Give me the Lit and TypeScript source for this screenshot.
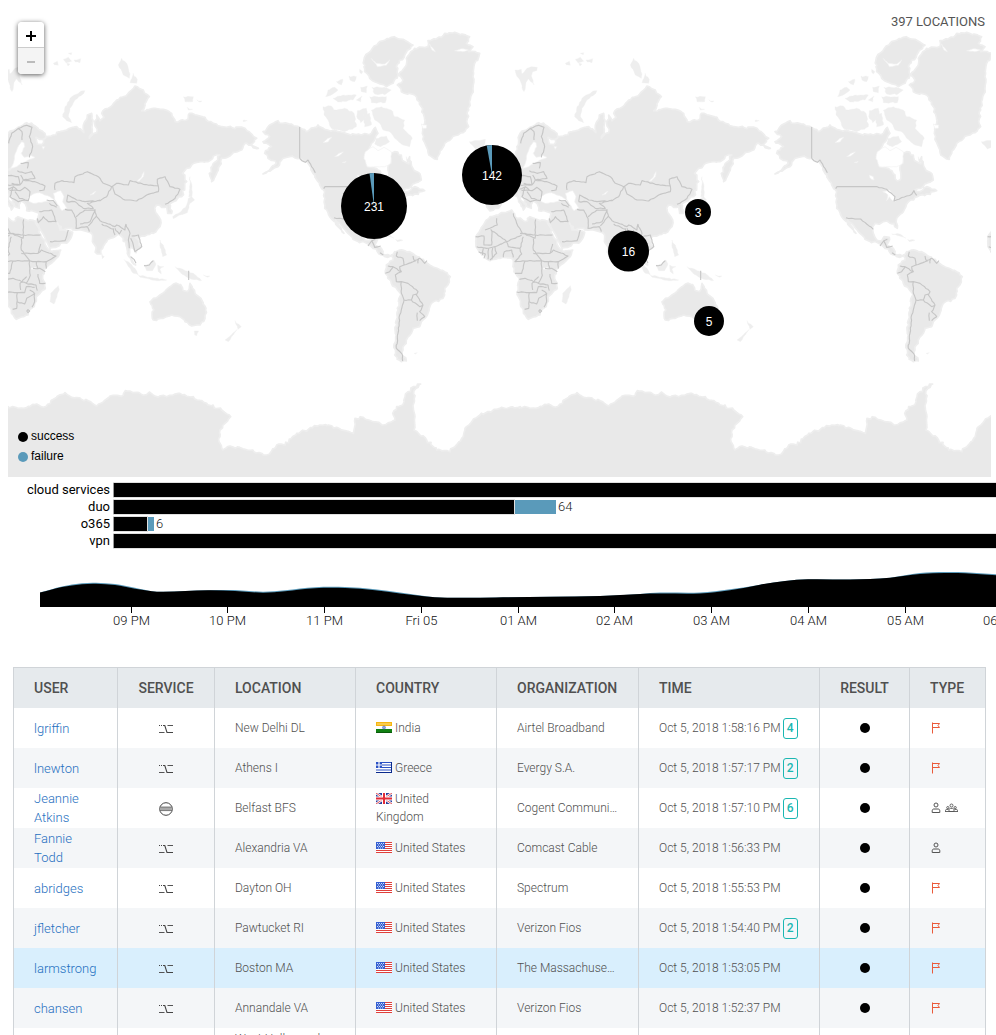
import { LitElement, html, svg, css, nothing } from "lit";
import { customElement } from "lit/decorators.js";
import { classMap } from "lit/directives/class-map.js";

/* ---------- world map geometry (three units per map pixel) ---------- */

type Pt = [number, number];

const parse = (s: string): Pt[] =>
  s.trim().split(/\s+/).map((p) => p.split(",").map(Number) as Pt);

/* Breaks long edges into small irregular steps, so coasts do not look ruled. */
const rough = (pts: Pt[], amp: number, closed: boolean): Pt[] => {
  const out: Pt[] = [];
  let seed = 7;
  const rnd = () => {
    seed = (seed * 16807) % 2147483647;
    return seed / 2147483647 - 0.5;
  };
  pts.forEach((a, i) => {
    out.push(a);
    if (!closed && i === pts.length - 1) return;
    const b = pts[(i + 1) % pts.length];
    const steps = Math.floor(Math.hypot(b[0] - a[0], b[1] - a[1]) / 7);
    for (let k = 1; k < steps; k++) {
      const t = k / steps;
      out.push([
        a[0] + (b[0] - a[0]) * t + rnd() * amp,
        a[1] + (b[1] - a[1]) * t + rnd() * amp,
      ]);
    }
  });
  return out;
};

const toPath = (pts: Pt[], closed: boolean) =>
  "M" + pts.map(([x, y]) => `${x.toFixed(1)} ${y.toFixed(1)}`).join("L") + (closed ? "Z" : "");
const shapes = (list: string[], amp = 7) =>
  list.map((s) => toPath(rough(parse(s), amp, true), true)).join("");
const lines = (list: string[]) =>
  list.map((s) => toPath(rough(parse(s), 3, false), false)).join("");
const straight = (list: string[]) => list.map((s) => toPath(parse(s), false)).join("");

const EURASIA = shapes([
  "20,420 24,400 54,382 80,368 100,375 135,400 138,412 118,418 108,412 112,432 125,434 140,410 160,405 180,395 200,390 230,380 252,398 250,375 262,345 275,340 277,390 268,415 290,398 284,370 290,345 300,362 312,352 305,340 330,322 350,300 385,280 405,258 430,270 448,290 425,332 460,325 490,328 515,340 525,365 560,360 568,340 600,348 640,370 680,382 735,385 755,402 770,415 750,435 775,445 735,430 725,450 690,468 664,475 655,510 635,545 628,520 640,490 660,465 640,468 625,485 590,487 560,505 548,520 560,545 545,590 520,605 508,612 515,640 503,640 500,620 485,622 470,615 465,630 482,660 480,680 460,700 425,708 405,712 425,740 408,758 392,742 388,765 407,795 395,785 382,760 378,735 370,715 355,702 345,710 320,725 308,745 302,762 292,762 280,730 272,698 262,695 235,690 205,685 190,690 172,668 180,690 200,692 218,697 205,725 150,745 145,735 128,700 108,668 118,640 105,635 80,632 76,612 64,602 58,625 45,620 38,600 20,575 26,600 42,615 34,630 20,605 4,580 -16,590 -31,605 -41,625 -66,633 -76,620 -76,590 -40,585 -45,560 -10,540 20,510 40,500 20,510 10,480",
]);
const AFRICA = shapes([
  "-46,645 -1,630 9,650 39,665 54,650 74,658 106,664 124,710 139,740 154,755 182,750 169,775 136,805 128,825 136,850 136,865 109,890 104,910 84,945 49,958 34,930 16,875 22,840 6,815 4,790 -1,775 -26,772 -66,782 -91,765 -108,740 -109,710 -86,675 -66,650",
]);
const AUSTRALIA = shapes([
  "450,905 480,885 500,868 520,852 542,854 548,870 562,875 570,850 585,880 605,900 618,925 615,955 600,975 575,978 555,965 540,950 515,945 490,955 460,960 458,925",
]);
const EAST_ISLANDS = shapes(
  [
    "575,590 584,600 570,610 562,638 540,645 520,656 518,650 545,632 560,615 565,595",
    "570,530 576,560 576,590 566,590 569,560",
    "255,272 250,282 225,300 210,325 205,350 215,368 200,362 188,350 195,320 215,290 240,275",
    "365,175 380,190 385,205 390,222 388,235 370,225 355,195",
    "400,220 412,238 410,250 390,248",
    "550,290 580,290 578,305 555,305",
    "590,300 606,303 600,307",
    "562,322 578,328 565,330",
    "730,360 742,362 730,365",
    "480,720 490,735 500,765 488,770 480,742",
    "432,795 448,792 462,780 468,792 458,812 440,812",
    "372,778 385,785 405,805 415,825 400,820 385,800",
    "415,825 450,832 500,840 470,842 420,832",
    "473,795 492,800 480,808 484,822 475,815",
    "525,800 540,805 556,812 580,820 605,842 575,838 545,822",
    "583,993 596,993 590,1007 584,1005",
    "705,962 724,980 714,988",
    "712,988 700,1005 685,1025 675,1020 698,1000",
    "175,857 178,870 162,912 150,905 152,880",
    "305,758 313,770 307,776",
    "9,210 28,208 30,222 45,205 58,200 76,202 74,212 62,215 58,228 66,255 56,245 49,236 42,248 36,275 30,262 24,240 14,228",
    "-128,425 -80,418 -84,440 -110,447",
    "160,190 172,184 175,196 163,194",
    "190,178 205,172 215,184 198,188",
    "205,160 215,158 214,164",
    "222,180 242,176 240,188 226,186",
    "200,190 210,192 204,198",
    "610,825 630,828 622,832",
  ],
  4
);
const SEAS = shapes(
  [
    "65,425 52,445 45,462 40,490 32,505 50,500 68,488 90,478 105,472 92,466 72,472 64,460 74,440 72,428",
    "84,592 100,582 118,578 150,590 166,604 140,604 100,610 86,604",
    "160,580 182,572 192,590 188,606 200,624 186,632 172,612 164,598",
    "92,804 108,802 106,808 94,808",
    "412,543 424,532 432,515 430,530 418,543",
    "126,440 134,440 130,448",
    "270,585 288,574 280,583",
  ],
  3
);
const EAST_BORDERS = lines([
  "71,658 69,705 24,700",
  "71,705 122,705",
  "4,640 14,670 31,700 69,715 71,705",
  "-46,655 -44,675 -81,690",
  "-64,688 -16,725 29,705",
  "-109,710 -84,708 -84,735 -61,735 -61,690",
  "-106,740 -76,745 -51,740 -16,725 -11,740 24,745 34,710",
  "-51,740 -46,760 -66,780",
  "-86,745 -88,765",
  "-70,746 -72,778",
  "-58,744 -60,778",
  "-26,772 -23,755 -1,750 4,772",
  "-100,755 -80,762 -84,775",
  "24,745 29,762 9,785 39,783 89,782 64,750 64,715",
  "64,760 114,760 122,732",
  "89,782 109,785 139,785 168,768 124,750 114,760",
  "89,782 89,812 91,826 79,850 39,835 22,838",
  "39,783 29,820 9,820",
  "14,876 74,878 79,860 104,862",
  "52,878 50,925 38,928",
  "52,905 74,912 80,895 104,880 89,870",
  "99,805 119,805 136,815",
  "114,822 119,850 136,850",
  "109,785 114,808",
  "80,830 60,850 62,870",
  "79,850 108,855 112,872",
  "104,880 104,905 96,922",
  "139,785 139,806",
  "165,570 165,550 185,542 222,548 225,530 262,515 295,530 310,550 335,560 320,590 300,602 255,605 230,600 203,585 200,605",
  "335,560 350,550 385,555 390,542 430,553 475,558 475,575 440,585 410,603 375,600 345,582 338,560",
  "475,558 472,538 495,530 510,560 540,568 525,595 495,613",
  "200,605 225,605 250,625 280,625 262,610 300,600",
  "195,628 215,630 228,655 228,685 262,680 268,695",
  "228,650 255,630 285,630 270,665 240,672",
  "285,628 290,650 300,662 345,680 350,675 375,690 378,672",
  "290,648 265,678",
  "305,672 340,688",
  "378,672 390,700 385,720 388,745",
  "340,685 345,705",
  "345,685 358,702 365,690",
  "395,708 415,705 425,740 405,755 400,735 392,715",
  "118,635 155,630 168,665 145,665 130,650 115,668 112,655",
  "150,725 195,722 205,690",
  "140,600 160,602 172,618",
  "148,610 170,622",
  "432,797 448,795 460,782",
  "26,430 35,400 55,385 66,395 66,420",
  "55,385 80,376 96,382 88,410 98,440 88,472",
  "62,490 85,488 82,505",
  "52,512 75,520 95,515 105,535 70,540 62,525",
  "70,540 105,545 135,558 132,570 118,572",
  "24,555 60,555 70,540",
  "28,570 60,572 75,562 90,575 85,602 58,595 45,575",
  "20,525 55,530 60,555 35,550",
  "40,560 30,590 55,605 75,600",
  "22,568 40,560 52,570",
  "80,933 84,929 89,933 84,938 80,933",
  "392,770 402,778 408,790",
]);

const AMERICAS = shapes([
  "150,362 165,370 190,372 215,382 235,395 270,375 290,388 330,395 360,402 400,405 430,400 442,382 450,400 430,430 410,470 420,500 450,510 465,525 472,543 480,540 480,510 490,488 484,465 500,455 520,465 530,485 542,492 545,470 555,505 575,520 580,540 560,550 525,570 540,575 560,560 590,572 560,582 525,592 500,612 490,635 470,655 472,685 462,670 430,665 402,675 400,700 410,720 425,722 432,710 448,712 440,735 460,745 470,765 488,768 480,772 460,765 435,745 420,732 380,720 360,700 335,670 322,660 348,700 330,680 305,650 290,625 287,570 270,545 255,520 240,490 215,475 185,470 165,475 150,500 105,522 145,490 120,475 110,460 130,440 105,425 125,410 105,395 125,375",
  "500,755 515,750 545,755 560,765 590,785 605,795 650,815 667,830 655,860 645,895 610,910 600,940 580,965 575,980 555,985 550,1000 535,1020 525,1050 520,1062 535,1083 520,1085 500,1065 502,1000 510,930 517,880 490,850 472,820 475,795 495,780 490,765",
  "560,145 600,140 600,122 640,112 650,100 680,97 725,110 715,130 735,140 722,155 755,160 752,172 740,190 735,230 735,270 728,290 722,330 716,365 722,380 690,405 650,430 635,460 628,478 610,470 595,440 583,400 590,370 580,320 560,285 520,275 508,255 525,240 512,225 535,195 535,175",
  "430,150 455,125 490,112 525,118 555,135 530,165 505,200 510,225 495,250 475,260 440,245 425,235 410,215 408,180 420,160",
]);
const WEST_ISLANDS = shapes([
  "430,330 460,320 490,330 500,350 530,360 525,385 553,415 545,440 525,435 500,415 490,400 465,390 455,370 440,360",
  "285,320 310,318 318,330 350,325 378,340 385,380 350,395 310,385 300,360 288,345",
  "388,332 415,325 418,345 398,368 386,350",
  "405,345 425,340 430,375 410,380",
  "425,290 475,290 472,308 430,308",
  "300,270 320,262 330,270 310,285 293,290",
  "315,295 345,285 385,285 375,300 330,306",
  "325,245 345,238 340,255",
  "363,228 385,230 380,245 366,240",
  "395,208 405,215 400,222",
  "398,262 418,258 415,278 400,275",
  "385,300 402,288 398,305",
  "432,262 470,262 490,270 470,284 440,282",
  "445,415 475,408 485,425 458,440 440,432",
  "535,470 545,480 538,490",
  "455,702 480,702 498,714 478,708",
  "503,718 525,721 508,725",
  "558,1060 568,1058 562,1062",
], 5);
const LAKES = shapes(
  [
    "428,575 448,570 462,585 466,604 458,602 448,590 440,602 444,585",
    "285,428 300,415 312,412 300,426",
    "320,470 338,458 346,456 332,468",
    "343,488 355,484 350,488",
    "388,525 400,530 402,540 394,538",
    "412,455 435,440 450,452 468,442 490,455 488,490 470,500 445,500 418,500 408,475",
    "430,175 445,190 470,192 485,180 475,196 448,200",
    "605,132 622,155 612,150",
    "680,152 700,146 722,150 705,155",
    "580,372 596,375 595,385 584,385",
  ],
  3
);
const WEST_BORDERS = lines([
  "215,475 232,487 240,480 262,518",
  "412,560 440,568 465,590 462,603 500,588 515,583 522,572 530,586",
  "318,653 345,657 362,657 380,672 400,688",
  "420,738 432,722 440,742 458,738",
  "432,722 442,718",
  "456,758 466,765",
  "508,755 505,768 525,775 528,795 555,785 575,775 590,790 597,782",
  "555,768 562,785",
  "572,776 570,790",
  "528,795 515,800 520,815 502,825 505,845 520,845 540,850 570,875 565,885 585,915 575,935 590,950 575,962",
  "520,815 495,800 480,798",
  "495,802 485,815 472,820",
  "528,900 550,900 555,885 566,882",
  "550,900 575,920 585,916",
  "568,938 568,962",
  "520,845 520,880 528,900 515,945 510,1000 505,1045 522,1062 524,1083",
]);
const RULED_BORDERS = straight(["215,381 215,475", "287,566 291,560 412,560"]);
const PAPUA_BORDER = straight(["566,812 566,840"]);

const ANTARCTICA = shapes([
  "24,110 70,115 110,102 130,112 160,88 195,68 215,82 265,92 290,108 330,78 370,76 376,62 400,68 440,74 448,66 465,78 500,80 540,70 580,80 620,100 665,120 692,140 675,160 660,180 657,215 668,240 690,228 735,238 800,255 830,225 855,225 890,190 960,165 1010,172 1060,190 1065,145 1090,142 1120,155 1150,165 1185,150 1178,130 1190,110 1208,105 1215,80 1240,50 1262,42 1242,62 1242,180 1280,210 1310,240 1350,245 1385,205 1395,175 1440,135 1500,115 1560,110 1560,330 24,330",
]);

interface Pin { x: number; y: number; r: number; count: number; failed: number; }
const PINS: Pin[] = [
  { x: 374, y: 206, r: 33, count: 231, failed: 5 },
  { x: 492, y: 175, r: 30, count: 142, failed: 4 },
  { x: 628.5, y: 251, r: 20.5, count: 16, failed: 0 },
  { x: 698, y: 212, r: 13, count: 3, failed: 0 },
  { x: 709, y: 321, r: 15, count: 5, failed: 0 },
];

const slice = (p: Pin) => {
  const a = (p.failed / p.count) * 2 * Math.PI;
  return `M${p.x} ${p.y}L${p.x - p.r * Math.sin(a)} ${p.y - p.r * Math.cos(a)}A${p.r} ${p.r} 0 0 1 ${p.x} ${p.y - p.r}Z`;
};

@customElement("world-map")
class WorldMap extends LitElement {
  static styles = css`
    :host { display: block; position: relative; height: 477px; overflow: hidden; }
    .canvas { display: block; width: 100%; height: 100%; }
    .land { fill: #e9e9e9; stroke: #eeeeee; stroke-width: 5; stroke-linejoin: round; }
    .seam { fill: #e9e9e9; }
    .isle { fill: #eeeeee; stroke: #f0f0f0; stroke-width: 1; }
    .sea { fill: #fff; stroke: #f2f2f2; stroke-width: 2; }
    .border { fill: none; stroke: #c6c6c6; stroke-width: 3.4; stroke-linejoin: round; }
    .pin { fill: #000; }
    .slice { fill: #5a9aba; }
    .count { fill: #fff; font: 12px "Liberation Sans", Arial, sans-serif; text-anchor: middle; }
    .zoom {
      position: absolute; left: 10px; top: 22px; width: 26px;
      border-radius: 4px; overflow: hidden; background: #fff;
      box-shadow: 0 1px 5px rgba(0, 0, 0, 0.65);
    }
    .zoom button {
      display: flex; align-items: center; justify-content: center; box-sizing: border-box;
      width: 100%; height: 26px; padding: 2px 0 0; border: 0; background: #fff; color: #000;
      border-bottom: 1px solid #ccc;
    }
    .zoom button + button { border-bottom: 0; padding: 1px 0 0; background: #f4f4f4; color: #bbb; }
    .total {
      position: absolute; right: 6px; top: 12px; margin: 0;
      font-size: 13px; line-height: 20px; color: #555; font-weight: 400;
    }
    .legend {
      position: absolute; left: 10px; bottom: 11px; margin: 0; padding: 0; list-style: none;
      font: 12px/20px "Liberation Sans", Arial, sans-serif; color: #000;
    }
    .legend li { display: flex; align-items: center; gap: 3px; }
    .dot { width: 10px; height: 10px; margin-top: 1px; border-radius: 50%; background: #000; }
    .dot.failure { background: #5a9aba; }
  `;
  render() {
    const world = (dx: number) => svg`
      <g transform="translate(${dx} 0) scale(.33333)">
        <path class="isle" d=${EAST_ISLANDS}></path>
        <path class="land" d=${EURASIA}></path>
        <path class="land" d=${AFRICA}></path>
        <path class="land" d=${AUSTRALIA}></path>
        <path class="sea" d=${SEAS}></path>
        <path class="border" d=${EAST_BORDERS + PAPUA_BORDER}></path>
        <g transform="translate(684 0)">
          <path class="isle" d=${WEST_ISLANDS}></path>
          <path class="land" d=${AMERICAS}></path>
          <path class="sea" d=${LAKES}></path>
          <path class="border" d=${WEST_BORDERS + RULED_BORDERS}></path>
        </g>
      </g>
      <g transform="translate(${dx} 370) scale(.33333)">
        <path class="land" d=${ANTARCTICA}></path>
        <path class="seam" d="M10 117H40V330H10z"></path>
      </g>`;
    return html`
      <svg class="canvas" viewBox="8 0 983 477" preserveAspectRatio="xMidYMin slice" role="img" aria-label="Sign-in locations">
        ${[0, 512, 1024].map(world)}
        ${PINS.map((p) => svg`
          <g>
            <circle class="pin" cx=${p.x} cy=${p.y} r=${p.r}></circle>
            ${p.failed ? svg`<path class="slice" d=${slice(p)}></path>` : nothing}
            <text class="count" x=${p.x} y=${p.y + 5}>${p.count}</text>
          </g>`)}
      </svg>
      <div class="zoom">
        <button aria-label="Zoom in">
          <svg width="12" height="12" viewBox="0 0 12 12"><path d="M1 6h10M6 1v10" stroke="currentColor" stroke-width="2"></path></svg>
        </button>
        <button aria-label="Zoom out" disabled>
          <svg width="12" height="12" viewBox="0 0 12 12"><path d="M2 6h8" stroke="currentColor" stroke-width="2"></path></svg>
        </button>
      </div>
      <p class="total">397 LOCATIONS</p>
      <ul class="legend">
        <li><span class="dot"></span>success</li>
        <li><span class="dot failure"></span>failure</li>
      </ul>`;
  }
}

/* ---------- sign-ins per service ---------- */

interface Service { name: string; ok: number; failed: number; total?: number; }
const SERVICES: Service[] = [
  { name: "cloud services", ok: 2400, failed: 0 },
  { name: "duo", ok: 400, failed: 41, total: 64 },
  { name: "o365", ok: 33, failed: 6, total: 6 },
  { name: "vpn", ok: 2400, failed: 0 },
];

@customElement("service-bars")
class ServiceBars extends LitElement {
  static styles = css`
    :host { display: block; overflow: hidden; padding: 4px 0; font-size: 13px; color: #000; }
    .row { display: flex; align-items: center; height: 17px; gap: 4px; }
    .name { flex: none; width: 110px; text-align: right; line-height: 17px; }
    .bar { display: flex; flex: none; gap: 1px; }
    .bar i { display: block; height: 14px; background: #000; box-shadow: -1px 0 0 #999, 0 0 0 1px rgba(0, 0, 0, 0.12); }
    .bar .failed { background: #5a9aba; box-shadow: none; }
    .value { margin-left: -2px; font-weight: 300; color: #222; line-height: 17px; }
  `;
  render() {
    return SERVICES.map((s) => html`
      <div class="row">
        <span class="name">${s.name}</span>
        <span class="bar">
          <i style="width:${s.ok}px"></i>
          ${s.failed ? html`<i class="failed" style="width:${s.failed}px"></i>` : nothing}
        </span>
        ${s.total ? html`<span class="value">${s.total}</span>` : nothing}
      </div>`);
  }
}

/* ---------- sign-ins over time ---------- */

/* x, height above the axis, share of failures */
const SERIES: [number, number, number][] = [
  [40, 14.4, 0], [62, 20, 0.6], [82, 22.8, 1], [96, 23.3, 1], [115, 22, 1], [135, 18.3, 1], [152, 15.8, 0],
  [163, 15.2, 0], [208, 16.8, 0], [235, 16, 1], [263, 14.3, 1], [285, 15.8, 1], [315, 18.8, 1],
  [345, 19, 1], [375, 16.8, 1], [400, 13.5, 1], [435, 9.8, 0], [460, 9.2, 0], [496, 9.5, 0],
  [550, 10.3, 0], [600, 11, 0], [640, 13, 0], [660, 13.4, 1], [700, 13.5, 1], [730, 16.7, 1],
  [760, 22.3, 0], [785, 26, 0], [808, 27.7, 0], [850, 27.5, 0], [870, 28, 0], [890, 29.3, 0],
  [920, 32.9, 1], [945, 34, 1], [965, 33.7, 1], [996, 31.7, 1], [1040, 28, 1], [1100, 26, 0],
];
const AXIS = 37;
const TICKS = ["09 PM", "10 PM", "11 PM", "Fri 05", "01 AM", "02 AM", "03 AM", "04 AM", "05 AM", "06 AM"];

const area = (extra: boolean) => {
  const p = SERIES.map(([x, h, f]): Pt => [x, AXIS - h - (extra ? f : 0)]);
  let d = `M${p[0][0]} ${AXIS}L${p[0][0]} ${p[0][1]}`;
  for (let i = 0; i < p.length - 1; i++) {
    const a = p[Math.max(0, i - 1)], b = p[i], c = p[i + 1], e = p[Math.min(p.length - 1, i + 2)];
    d += `C${b[0] + (c[0] - b[0]) / 3} ${b[1] + ((c[1] - a[1]) / (c[0] - a[0])) * ((c[0] - b[0]) / 3)} ${c[0] - (c[0] - b[0]) / 3} ${c[1] - ((e[1] - b[1]) / (e[0] - b[0])) * ((c[0] - b[0]) / 3)} ${c[0]} ${c[1]}`;
  }
  return d + `L${p[p.length - 1][0]} ${AXIS}Z`;
};

@customElement("time-chart")
class TimeChart extends LitElement {
  static styles = css`
    :host { display: block; margin-top: 17px; height: 62px; overflow: hidden; }
    svg { display: block; width: 100%; height: 62px; }
    .ok { fill: #000; }
    .failed { fill: #5a9aba; }
    .tick { stroke: #000; stroke-width: 1; }
    text { font-size: 13px; font-weight: 300; fill: #111; text-anchor: middle; }
  `;
  render() {
    return html`
      <svg role="img" aria-label="Sign-ins per hour">
        <path class="failed" d=${area(true)}></path>
        <path class="ok" d=${area(false)}></path>
        ${TICKS.map((t, i) => {
          const x = Math.floor(131 + i * 96.75) + 0.5;
          return svg`<line class="tick" x1=${x} x2=${x} y1=${AXIS} y2=${AXIS + 6}></line>
            <text x=${x} y=${AXIS + 18}>${t}</text>`;
        })}
      </svg>`;
  }
}

/* ---------- event table ---------- */

const FLAGS: Record<string, unknown> = {
  India: svg`<path fill="#f6b511" d="M0 0h16v4H0z"/><path fill="#fbe08a" d="M1 1.500h14v1H1z"/><path fill="#fff" d="M0 4h16v3H0z"/><path fill="#118012" d="M0 7h16v4H0z"/><path fill="#0a5a0c" d="M0 10h16v1H0z"/><circle cx="8" cy="5.500" r="1.500" fill="#8fa5dd" stroke="#5470bd" stroke-width=".6"/>`,
  Greece: svg`<path fill="#fff" d="M0 0h16v11H0z"/><path d="M0 .5h16M0 3h16M0 5.500h16M0 8h16M0 10.500h16" stroke="#2a51c4" stroke-width="1.200"/><path fill="#2a51c4" d="M0 0h6v6H0z"/><path d="M3 0v6M0 3h6" stroke="#fff" stroke-width="1.200"/><path d="M15.500 0v11M0 10.500h16" stroke="#0b2a8c"/>`,
  "United Kingdom": svg`<path fill="#2a3f9d" d="M0 0h16v11H0z"/><path d="M0 0l16 11M16 0L0 11" stroke="#fff" stroke-width="2.400"/><path d="M0 0l16 11M16 0L0 11" stroke="#e0525b" stroke-width="1"/><path d="M8 0v11M0 5.500h16" stroke="#fff" stroke-width="4"/><path d="M8 0v11M0 5.500h16" stroke="#e22b38" stroke-width="2"/>`,
  "United States": svg`<path fill="#fff" d="M0 0h16v11H0z"/><path d="M0 .5h16M0 2.500h16M0 4.500h16M0 6.500h16M0 8.500h16M0 10.500h16" stroke="#e0403c" stroke-width="1.100"/><path fill="#3560d2" d="M0 0h9v7H0z"/><path d="M1 1.500h1M3 1.500h1M5 1.500h1M7 1.500h1M2 3h1M4 3h1M6 3h1M1 4.500h1M3 4.500h1M5 4.500h1M7 4.500h1M2 6h1M4 6h1M6 6h1" stroke="#fff" stroke-width=".8"/>`,
};

const shuffleIcon = html`<svg width="14" height="10" viewBox="0 0 14 10" role="img" aria-label="Shuffled" fill="none">
  <path d="M0 1.500h1M2 1.500h1M4 1.500h1" stroke="#444"/><path d="M5 1.500h.8L8 8.500H14" stroke="#444" stroke-width="1.100"/><path d="M0 8.500h5.500M8.500 1.500H14" stroke="#555" stroke-width="1.100"/></svg>`;
const stopIcon = html`<svg width="14" height="14" viewBox="0 0 14 14" role="img" aria-label="Blocked band"><circle cx="7" cy="7" r="6.300" fill="none" stroke="#444"/><path d="M.8 5h12.400v3.600H.8z" fill="#aaa"/><path d="M.8 5h12.400M.8 8.600h12.400" stroke="#555" stroke-width=".7"/></svg>`;
const flagIcon = html`<svg width="10" height="12" viewBox="0 0 10 12" role="img" aria-label="Flagged" fill="none" stroke="#ea5a3a"><path d="M1.500 .500v11"/><path d="M1.500 1.500h7l-1.500 2 1.500 2h-7"/></svg>`;
const personIcon = html`<svg width="10" height="12" viewBox="0 0 10 12" role="img" aria-label="User" fill="none" stroke="#555"><circle cx="5" cy="3" r="2"/><path d="M1.200 10.500V8.800C1.200 7.500 2 7 3 7h4c1 0 1.800.5 1.800 1.800v1.700z"/></svg>`;
const groupIcon = html`<svg width="13" height="10" viewBox="0 0 13 10" role="img" aria-label="Group" fill="none" stroke="#555" stroke-width=".9"><circle cx="6.500" cy="2.500" r="1.500"/><circle cx="2.800" cy="4.600" r="1.100"/><circle cx="10.200" cy="4.600" r="1.100"/><path d="M4 8.500V7c0-1 .6-1.600 1.500-1.600h2C8.400 5.400 9 6 9 7v1.500zM.5 8.500V7.600C.5 6.800 1 6.400 1.700 6.400H3.500M12.500 8.500V7.600c0-.8-.5-1.200-1.200-1.200H9.500M0 8.500h13"/></svg>`;

interface Row {
  user: string; place: string; country: string; org: string; time: string;
  badge?: number; kind: "flag" | "person" | "both"; band?: boolean; active?: boolean;
}
const ROWS: Row[] = [
  { user: "lgriffin", place: "New Delhi DL", country: "India", org: "Airtel Broadband", time: "1:58:16 PM", badge: 4, kind: "flag" },
  { user: "lnewton", place: "Athens I", country: "Greece", org: "Evergy S.A.", time: "1:57:17 PM", badge: 2, kind: "flag" },
  { user: "Jeannie Atkins", place: "Belfast BFS", country: "United Kingdom", org: "Cogent Communications", time: "1:57:10 PM", badge: 6, kind: "both", band: true },
  { user: "Fannie Todd", place: "Alexandria VA", country: "United States", org: "Comcast Cable", time: "1:56:33 PM", kind: "person" },
  { user: "abridges", place: "Dayton OH", country: "United States", org: "Spectrum", time: "1:55:53 PM", kind: "flag" },
  { user: "jfletcher", place: "Pawtucket RI", country: "United States", org: "Verizon Fios", time: "1:54:40 PM", badge: 2, kind: "flag" },
  { user: "larmstrong", place: "Boston MA", country: "United States", org: "The Massachusetts Port", time: "1:53:05 PM", kind: "flag", active: true },
  { user: "chansen", place: "Annandale VA", country: "United States", org: "Verizon Fios", time: "1:52:37 PM", kind: "flag" },
  { user: "mporter", place: "West Hollywood CA", country: "United States", org: "Spectrum", time: "1:52:02 PM", kind: "flag" },
];

@customElement("event-table")
class EventTable extends LitElement {
  static styles = css`
    :host { display: block; margin: 35px 10px 0 13px; }
    table { width: 100%; table-layout: fixed; border-collapse: collapse; border: 1px solid #d0d4d8; }
    .c-user { width: 104px; } .c-service { width: 97px; } .c-place { width: 141px; }
    .c-country { width: 141px; } .c-org { width: 142px; } .c-time { width: 181px; }
    .c-result { width: 90px; } .c-type { width: 76px; }
    th, td { padding: 0 20px; text-align: left; border-left: 1px solid #d0d4d8; }
    th { height: 40px; background: #e6eaed; color: #505050; font-size: 14px; font-weight: 500; line-height: 20px; }
    td { height: 40px; color: #505050; font-size: 12px; font-weight: 300; line-height: 18px; }
    tbody tr:nth-child(even) { background: #f4f6f8; }
    tbody tr.active { background: #d9effd; }
    td.user { font-size: 13px; line-height: 19px; }
    a { color: #1f6fc0; text-decoration: none; }
    th.mid, td.mid { text-align: center; padding: 0; }
    .org { white-space: nowrap; overflow: hidden; text-overflow: ellipsis; }
    .time { white-space: nowrap; }
    td svg { vertical-align: middle; }
    .country svg { vertical-align: -1px; margin-right: 3px; }
    .badge {
      display: inline-block; width: 15px; height: 21px; box-sizing: border-box; margin-left: 2px;
      border: 1px solid #1ab7b2; border-radius: 3px; color: #1ab7b2;
      font-weight: 500; line-height: 19px; text-align: center;
    }
    .dot { display: block; width: 10px; height: 10px; margin: 0 auto; border-radius: 50%; background: #000; }
    td.type { padding: 0 0 0 21px; }
    .icons { display: flex; align-items: center; gap: 4px; }
  `;
  render() {
    return html`
      <table>
        <colgroup>
          ${["user", "service", "place", "country", "org", "time", "result", "type"].map((c) => html`<col class="c-${c}" />`)}
        </colgroup>
        <thead>
          <tr>
            <th>USER</th><th class="mid">SERVICE</th><th>LOCATION</th><th>COUNTRY</th>
            <th>ORGANIZATION</th><th>TIME</th><th class="mid">RESULT</th><th>TYPE</th>
          </tr>
        </thead>
        <tbody>
          ${ROWS.map((r) => html`
            <tr class=${classMap({ active: !!r.active })}>
              <td class="user"><a href="#">${r.user}</a></td>
              <td class="mid">${r.band ? stopIcon : shuffleIcon}</td>
              <td>${r.place}</td>
              <td class="country"><svg width="16" height="11" viewBox="0 0 16 11" aria-hidden="true">${FLAGS[r.country]}</svg>${r.country}</td>
              <td class="org">${r.org}</td>
              <td class="time">Oct 5, 2018 ${r.time}${r.badge ? html`<span class="badge">${r.badge}</span>` : nothing}</td>
              <td class="mid"><span class="dot"></span></td>
              <td class="type"><div class="icons">${r.kind === "flag" ? flagIcon : personIcon}${r.kind === "both" ? groupIcon : nothing}</div></td>
            </tr>`)}
        </tbody>
      </table>`;
  }
}

@customElement("app-root")
class AppRoot extends LitElement {
  static styles = css`
    :host {
      display: block; height: 100vh; overflow: hidden; background: #fff;
      font-family: Roboto, "Liberation Sans", sans-serif;
    }
    world-map { margin: 0 5px 0 8px; }
  `;
  render() {
    return html`
      <world-map></world-map>
      <service-bars></service-bars>
      <time-chart></time-chart>
      <event-table></event-table>`;
  }
}
